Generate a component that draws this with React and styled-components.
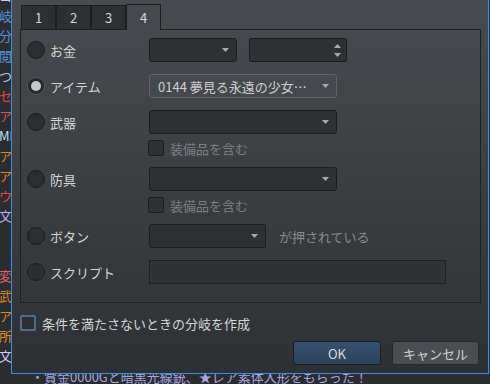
import React from 'react';
import styled, { createGlobalStyle, css } from 'styled-components';

const Global = createGlobalStyle`
  html, body { margin: 0; padding: 0; }
  body {
    width: 490px; height: 384px; overflow: hidden;
    background: #2a2c2f;
    font-family: "Noto Sans CJK JP", "Noto Sans", sans-serif;
  }
`;

const Screen = styled.div`
  position: relative;
  width: 490px;
  height: 384px;
  overflow: hidden;
  background: #2a2c2f;
`;

const Editor = styled.div`
  display: flex;
  flex-direction: column;
  margin-top: -14px;
`;

const EditorLine = styled.div`
  height: 20px;
  line-height: 20px;
  font-size: 13px;
  white-space: nowrap;
  color: ${(p) => p.$color || '#c8c8e8'};
  margin-left: ${(p) => (p.$indent != null ? p.$indent : -1)}px;
`;

const PreviewLine = styled(EditorLine)`
  margin-top: 1px;
`;

const Dialog = styled.div`
  position: absolute;
  left: 11px;
  top: -1px;
  width: 478px;
  height: 375px;
  box-sizing: border-box;
  border: 1px solid #3a8fe2;
  background: linear-gradient(to bottom, #484b4f 0%, #2e3134 100%);
  display: flex;
  flex-direction: column;
  padding: 4px 7px 8px 8px;
  color: #d6d6d6;
  font-size: 13px;
`;

const TabBar = styled.div`
  display: flex;
  align-items: flex-end;
  height: 26px;
  margin-bottom: -1px;
  padding-left: 1px;
  position: relative;
  z-index: 1;
`;

const Tab = styled.div`
  width: 35px;
  box-sizing: border-box;
  display: flex;
  align-items: center;
  justify-content: center;
  font-size: 13px;
  color: #d8d8d8;
  border: 1px solid #1c1e20;
  ${(p) =>
    p.$active
      ? css`
          height: 26px;
          border-bottom: none;
          background: #45484c;
          padding-bottom: 1px;
        `
      : css`
          height: 25px;
          background: #2d3033;
        `}
`;

const Panel = styled.div`
  height: 274px;
  box-sizing: border-box;
  border: 1px solid #1e2022;
  padding: 8px 6px 0 6px;
  display: flex;
  flex-direction: column;
`;

const OptionRow = styled.div`
  display: flex;
  align-items: center;
  height: ${(p) => p.$h || 24}px;
  margin-top: ${(p) => p.$mt || 0}px;
`;

const Choice = styled.div`
  display: flex;
  align-items: center;
  gap: 5px;
  width: 122px;
  flex-shrink: 0;
  font-size: 13px;
  color: #d6d6d6;
`;

const Radio = styled.span`
  width: 18px;
  height: 18px;
  box-sizing: border-box;
  border-radius: 50%;
  border: 1px solid #1b1d1f;
  background: #2b2e31;
  display: flex;
  align-items: center;
  justify-content: center;
  ${(p) =>
    p.$checked &&
    css`
      border-color: #54575b;
      background: #26292c;
      &::after {
        content: '';
        width: 10px;
        height: 10px;
        border-radius: 50%;
        background: #c6c6c6;
      }
    `}
`;

const Combo = styled.div`
  width: ${(p) => p.$w}px;
  height: 24px;
  box-sizing: border-box;
  border-radius: 3px;
  border: 1px solid ${(p) => (p.$active ? '#606367' : '#1b1d1f')};
  background: ${(p) => (p.$active ? '#45484c' : '#2e3134')};
  display: flex;
  align-items: center;
  justify-content: space-between;
  padding: 0 7px 0 8px;
  font-size: 13px;
  color: #cfcfcf;
  white-space: nowrap;
  overflow: hidden;
  flex-shrink: 0;
`;

const Spin = styled(Combo)`
  margin-left: 12px;
  border-radius: 2px;
  padding-right: 5px;
`;

const SpinArrows = styled.div`
  display: flex;
  flex-direction: column;
  gap: 5px;
  margin-left: auto;
`;

const TextField = styled.div`
  width: 297px;
  height: 24px;
  box-sizing: border-box;
  border: 1px solid #1c1e20;
  background: #303336;
`;

const Check = styled.span`
  width: 16px;
  height: 16px;
  box-sizing: border-box;
  border-radius: 2px;
  flex-shrink: 0;
  ${(p) =>
    p.$accent
      ? css`
          border: 2px solid #4b6c90;
          background: #2c2f32;
        `
      : css`
          border: 1px solid #1b1d1f;
          background: #2e3134;
        `}
`;

const SubCheck = styled.div`
  display: flex;
  align-items: center;
  gap: 6px;
  margin-left: 121px;
  color: #7b7e81;
  font-size: 13px;
`;

const Hint = styled.span`
  margin-left: 13px;
  color: #878a8d;
  font-size: 13px;
`;

const BranchRow = styled.div`
  display: flex;
  align-items: center;
  gap: 6px;
  height: 16px;
  margin-top: 12px;
  font-size: 13px;
  color: #d6d6d6;
`;

const ButtonRow = styled.div`
  display: flex;
  justify-content: flex-end;
  gap: 11px;
  margin-top: 10px;
  padding-right: 2px;
`;

const Button = styled.div`
  width: ${(p) => p.$w}px;
  height: 24px;
  box-sizing: border-box;
  border-radius: 3px;
  display: flex;
  align-items: center;
  justify-content: center;
  font-size: 13px;
  ${(p) =>
    p.$primary
      ? css`
          background: linear-gradient(to bottom, #37506f, #2d4159);
          border: 1px solid #1a1e23;
          color: #dcdcdc;
        `
      : css`
          background: #4a4d51;
          border: 1px solid #28292b;
          color: #d2d2d2;
        `}
`;

const Arrow = ({ up }) => (
  <svg width="7" height="4" viewBox="0 0 7 4">
    <path d={up ? 'M0 4h7L3.5 0z' : 'M0 0h7L3.5 4z'} fill="#a9abad" />
  </svg>
);

const editorLines = [
  ['コ', '#c8c8e8'],
  ['岐', '#5b90dc'],
  ['分', '#5b90dc'],
  ['閲', '#5b90dc'],
  ['つ', '#a9c6e6'],
  ['セ', '#e0484c'],
  ['ア', '#d0585c'],
  ['ME', '#b6e0f0'],
  ['ア', '#e0861e'],
  ['ア', '#e0861e'],
  ['ウ', '#e0484c'],
  ['文', '#bcaef0'],
  ['', ''],
  ['', ''],
  ['変', '#e0606a'],
  ['武', '#d8841c'],
  ['ア', '#e08a20'],
  ['所', '#e08a28'],
  ['文', '#d0c8f0'],
];

export default function App() {
  return (
    <Screen>
      <Global />
      <Editor>
        {editorLines.map(([t, c], i) => (
          <EditorLine key={i} $color={c}>
            {t}
          </EditorLine>
        ))}
        <PreviewLine $color="#a4a8e4" $indent={31}>
          ・賞金0000Gと暗黒光線銃、★レア素体人形をもらった！
        </PreviewLine>
      </Editor>

      <Dialog>
        <TabBar>
          <Tab>1</Tab>
          <Tab>2</Tab>
          <Tab>3</Tab>
          <Tab $active>4</Tab>
        </TabBar>
        <Panel>
          <OptionRow>
            <Choice>
              <Radio />
              お金
            </Choice>
            <Combo $w={88}>
              <span />
              <Arrow />
            </Combo>
            <Spin $w={98}>
              <SpinArrows>
                <Arrow up />
                <Arrow />
              </SpinArrows>
            </Spin>
          </OptionRow>
          <OptionRow $mt={12}>
            <Choice>
              <Radio $checked />
              アイテム
            </Choice>
            <Combo $w={188} $active>
              <span>0144 夢見る永遠の少女…</span>
              <Arrow />
            </Combo>
          </OptionRow>
          <OptionRow $mt={12}>
            <Choice>
              <Radio />
              武器
            </Choice>
            <Combo $w={188}>
              <span />
              <Arrow />
            </Combo>
          </OptionRow>
          <OptionRow $mt={6} $h={16}>
            <SubCheck>
              <Check />
              装備品を含む
            </SubCheck>
          </OptionRow>
          <OptionRow $mt={11}>
            <Choice>
              <Radio />
              防具
            </Choice>
            <Combo $w={188}>
              <span />
              <Arrow />
            </Combo>
          </OptionRow>
          <OptionRow $mt={6} $h={16}>
            <SubCheck>
              <Check />
              装備品を含む
            </SubCheck>
          </OptionRow>
          <OptionRow $mt={11}>
            <Choice>
              <Radio />
              ボタン
            </Choice>
            <Combo $w={117}>
              <span />
              <Arrow />
            </Combo>
            <Hint>が押されている</Hint>
          </OptionRow>
          <OptionRow $mt={12}>
            <Choice>
              <Radio />
              スクリプト
            </Choice>
            <TextField />
          </OptionRow>
        </Panel>
        <BranchRow>
          <Check $accent />
          条件を満たさないときの分岐を作成
        </BranchRow>
        <ButtonRow>
          <Button $primary $w={88}>
            OK
          </Button>
          <Button $w={87}>キャンセル</Button>
        </ButtonRow>
      </Dialog>
    </Screen>
  );
}
